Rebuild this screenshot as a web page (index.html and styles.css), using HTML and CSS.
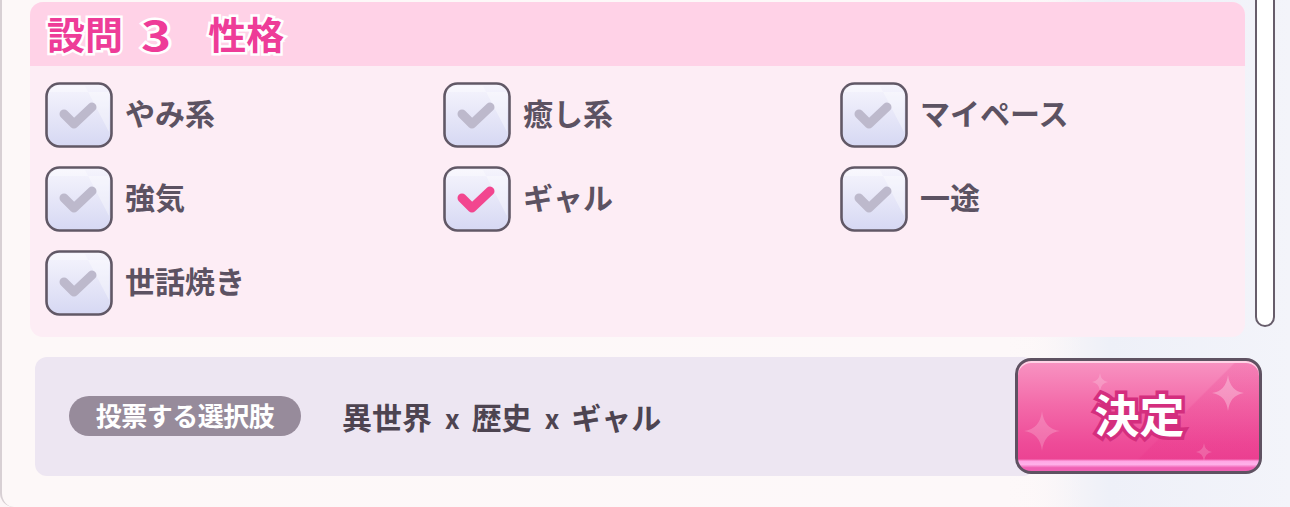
FILE: index.html
```html
<!DOCTYPE html>
<html lang="ja">
<head>
<meta charset="utf-8">
<link rel="stylesheet" href="styles.css">
</head>
<body>
<div class="screen">
  <div class="scrollbar"></div>
  <div class="panel">
    <section class="card">
      <header class="card-head">
        <h1 class="title"><span>設問</span><span class="num">3</span><span>性格</span></h1>
      </header>
      <div class="options">
        <label class="opt"><svg class="cb" viewBox="0 0 68 66"><defs><linearGradient id="g1" x1="0" y1="0" x2="0" y2="1"><stop offset="0" stop-color="#f6f5fd"/><stop offset="1" stop-color="#d6d8f3"/></linearGradient></defs><rect x="1.5" y="1.5" width="65" height="63" rx="13" fill="url(#g1)" stroke="#615866" stroke-width="2.6"/><path d="M4 10 Q4 4 12 4 L40 4 L64 50 L64 10 Z" fill="#ffffff" opacity=".35"/><polyline points="19,32 29,42 47,25" fill="none" stroke="#bdb9cc" stroke-width="9" stroke-linecap="round" stroke-linejoin="round"/></svg><span class="lbl">やみ系</span></label>
        <label class="opt"><svg class="cb" viewBox="0 0 68 66"><rect x="1.5" y="1.5" width="65" height="63" rx="13" fill="url(#g1)" stroke="#615866" stroke-width="2.6"/><path d="M4 10 Q4 4 12 4 L40 4 L64 50 L64 10 Z" fill="#ffffff" opacity=".35"/><polyline points="19,32 29,42 47,25" fill="none" stroke="#bdb9cc" stroke-width="9" stroke-linecap="round" stroke-linejoin="round"/></svg><span class="lbl">癒し系</span></label>
        <label class="opt"><svg class="cb" viewBox="0 0 68 66"><rect x="1.5" y="1.5" width="65" height="63" rx="13" fill="url(#g1)" stroke="#615866" stroke-width="2.6"/><path d="M4 10 Q4 4 12 4 L40 4 L64 50 L64 10 Z" fill="#ffffff" opacity=".35"/><polyline points="19,32 29,42 47,25" fill="none" stroke="#bdb9cc" stroke-width="9" stroke-linecap="round" stroke-linejoin="round"/></svg><span class="lbl">マイペース</span></label>
        <label class="opt"><svg class="cb" viewBox="0 0 68 66"><rect x="1.5" y="1.5" width="65" height="63" rx="13" fill="url(#g1)" stroke="#615866" stroke-width="2.6"/><path d="M4 10 Q4 4 12 4 L40 4 L64 50 L64 10 Z" fill="#ffffff" opacity=".35"/><polyline points="19,32 29,42 47,25" fill="none" stroke="#bdb9cc" stroke-width="9" stroke-linecap="round" stroke-linejoin="round"/></svg><span class="lbl">強気</span></label>
        <label class="opt"><svg class="cb" viewBox="0 0 68 66"><rect x="1.5" y="1.5" width="65" height="63" rx="13" fill="url(#g1)" stroke="#615866" stroke-width="2.6"/><path d="M4 10 Q4 4 12 4 L40 4 L64 50 L64 10 Z" fill="#ffffff" opacity=".35"/><polyline points="19,32 29,42 47,25" fill="none" stroke="#f2468f" stroke-width="9" stroke-linecap="round" stroke-linejoin="round"/></svg><span class="lbl">ギャル</span></label>
        <label class="opt"><svg class="cb" viewBox="0 0 68 66"><rect x="1.5" y="1.5" width="65" height="63" rx="13" fill="url(#g1)" stroke="#615866" stroke-width="2.6"/><path d="M4 10 Q4 4 12 4 L40 4 L64 50 L64 10 Z" fill="#ffffff" opacity=".35"/><polyline points="19,32 29,42 47,25" fill="none" stroke="#bdb9cc" stroke-width="9" stroke-linecap="round" stroke-linejoin="round"/></svg><span class="lbl">一途</span></label>
        <label class="opt"><svg class="cb" viewBox="0 0 68 66"><rect x="1.5" y="1.5" width="65" height="63" rx="13" fill="url(#g1)" stroke="#615866" stroke-width="2.6"/><path d="M4 10 Q4 4 12 4 L40 4 L64 50 L64 10 Z" fill="#ffffff" opacity=".35"/><polyline points="19,32 29,42 47,25" fill="none" stroke="#bdb9cc" stroke-width="9" stroke-linecap="round" stroke-linejoin="round"/></svg><span class="lbl">世話焼き</span></label>
      </div>
    </section>
    <div class="footer">
      <div class="vote-bar">
        <span class="pill">投票する選択肢</span>
        <span class="choice">異世界<span class="x">x</span>歴史<span class="x">x</span>ギャル</span>
      </div>
      <button class="decide">
        <svg class="sparkles" viewBox="0 0 241 110" preserveAspectRatio="none">
          <path d="M210 14 Q212 30 226 32 Q212 34 210 50 Q208 34 194 32 Q208 30 210 14Z" fill="#ffffff" opacity=".3"/>
          <path d="M82 12 Q83 20 90 21 Q83 22 82 30 Q81 22 74 21 Q81 20 82 12Z" fill="#ffffff" opacity=".2"/>
          <path d="M24 50 Q26 68 42 70 Q26 72 24 90 Q22 72 6 70 Q22 68 24 50Z" fill="#ffffff" opacity=".2"/>
          <path d="M186 82 Q187 90 194 91 Q187 92 186 100 Q185 92 178 91 Q185 90 186 82Z" fill="#ffffff" opacity=".18"/>
        </svg>
        <span class="decide-text">決定</span>
      </button>
    </div>
  </div>
</div>
</body>
</html>
```

FILE: styles.css
```css
* { box-sizing: border-box; }
html, body {
  margin: 0;
  padding: 0;
}
body {
  width: 1290px;
  height: 507px;
  overflow: hidden;
  font-family: "Noto Sans CJK JP", "Noto Sans", sans-serif;
  background: linear-gradient(90deg, #fcf6f7 0%, #fcf7f8 80%, #eef0f8 86%, #f3f4fa 100%);
}
.screen {
  position: relative;
  width: 1290px;
  height: 507px;
}
.panel {
  width: 1290px;
  height: 507px;
  padding: 2px 0 0 30px;
  border-left: 2px solid #d8d0d4;
  border-bottom-left-radius: 14px;
  background: linear-gradient(90deg, #fdf8f8 0%, #fdf8f9 78%, rgba(238,240,248,0) 84%);
}
.card {
  width: 1215px;
  margin-left: -2px;
  border-radius: 13px;
  background: #fdedf5;
  overflow: hidden;
}
.card-head {
  height: 64px;
  background: #ffd2e7;
  display: flex;
  align-items: center;
  padding-left: 17px;
}
.title {
  margin: 0;
  display: flex;
  align-items: center;
  font-size: 38px;
  font-weight: 700;
  color: #ee3c98;
  letter-spacing: 0;
  line-height: 1;
  -webkit-text-stroke: 5px #ffffff;
  paint-order: stroke fill;
  margin-top: -2px;
}
.title .num {
  font-size: 41px;
  margin: 0 40px 0 21px;
  transform: scaleX(1.25);
}
.options {
  display: grid;
  grid-template-columns: 398px 397px 1fr;
  row-gap: 18px;
  padding: 16px 0 21px 15px;
}
.opt {
  display: flex;
  align-items: center;
  gap: 12px;
  height: 66px;
}
.cb {
  width: 68px;
  height: 66px;
  flex: none;
}
.lbl {
  font-size: 30px;
  font-weight: 700;
  color: #5c5262;
  line-height: 1;
  margin-top: -6px;
}
.footer {
  display: flex;
  align-items: flex-start;
  margin-top: 20px;
  margin-left: 3px;
}
.vote-bar {
  width: 1000px;
  height: 119px;
  background: #ede6f2;
  border-radius: 12px;
  display: flex;
  align-items: center;
  padding-left: 34px;
  padding-bottom: 2px;
}
.pill {
  display: inline-flex;
  align-items: center;
  justify-content: center;
  width: 232px;
  height: 40px;
  border-radius: 20px;
  background: #978b9b;
  color: #ffffff;
  font-size: 26px;
  font-weight: 700;
  line-height: 1;
  letter-spacing: -0.5px;
  padding-bottom: 2px;
}
.choice {
  margin-left: 41px;
  font-size: 30px;
  font-weight: 700;
  color: #4d4451;
  line-height: 1;
}
.choice .x {
  font-size: 26px;
  margin: 0 12px 0 13px;
}
.decide {
  position: relative;
  margin-left: -20px;
  margin-top: 1px;
  width: 247px;
  height: 116px;
  border: 3px solid #5f5262;
  border-radius: 16px;
  padding: 0;
  background:
    linear-gradient(180deg, rgba(255,255,255,0) 89%, #ffa6e4 91%, #ffb2ea 94%, #f060b4 97%),
    linear-gradient(135deg, rgba(255,255,255,0) 62%, rgba(230,40,130,.16) 62.5%),
    linear-gradient(180deg, #f894c2 0%, #f36aa9 40%, #ee4b98 75%, #ea3d8f 100%);
  box-shadow: inset 0 2px 0 #ffd3e6;
  overflow: hidden;
  cursor: pointer;
  display: flex;
  align-items: center;
  justify-content: center;
}
.sparkles {
  position: absolute;
  left: 0;
  top: 0;
  width: 100%;
  height: 100%;
}
.decide-text {
  position: relative;
  font-family: "Noto Sans CJK JP", sans-serif;
  font-size: 45px;
  font-weight: 700;
  color: #ffffff;
  line-height: 1;
  -webkit-text-stroke: 7px #d42e7e;
  paint-order: stroke fill;
  margin-top: -6px;
  margin-left: 2px;
}
.scrollbar {
  position: absolute;
  left: 1255px;
  top: -6px;
  width: 20px;
  height: 333px;
  background: #ffffff;
  border: 2px solid #675d6b;
  border-radius: 0 0 10px 10px;
  z-index: 2;
}
```
